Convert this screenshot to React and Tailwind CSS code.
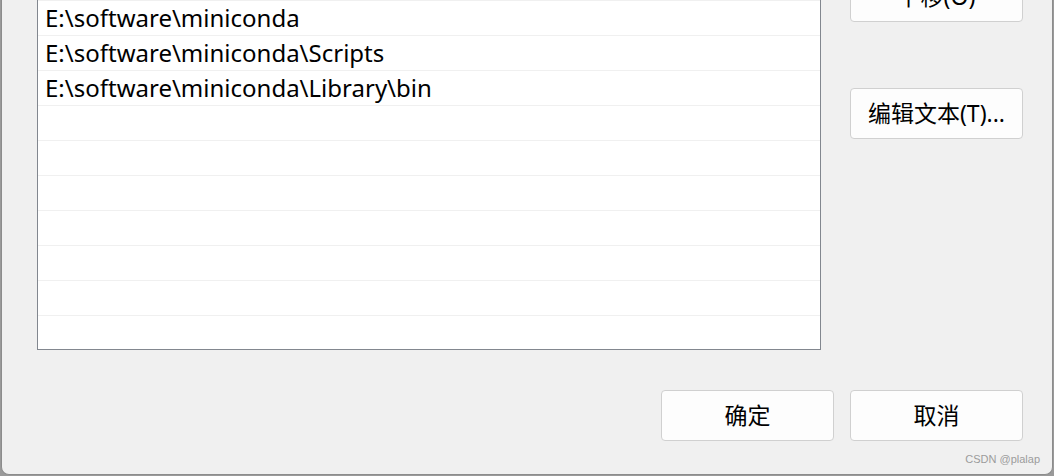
const rows = [
  'E:\\software\\miniconda',
  'E:\\software\\miniconda\\Scripts',
  'E:\\software\\miniconda\\Library\\bin',
  '', '', '', '', '', '', '',
]

function Btn({ children, className = '' }) {
  return (
    <div
      className={`flex h-[51px] w-[173px] items-center justify-center rounded-[4px] border border-[#d0d0d0] bg-[#fdfdfd] text-[23px] text-black ${className}`}
    >
      {children}
    </div>
  )
}

export default function App() {
  return (
    <div
      className="h-[476px] w-[1054px] overflow-hidden bg-[#9a9a9a]"
      style={{ fontFamily: '"Noto Sans", "Noto Sans CJK SC", sans-serif' }}
    >
      <div className="relative ml-[1px] h-[475px] w-[1052px] rounded-b-[8px] border-x border-b border-[#8c8c8c] bg-[#f0f0f0]">
        <div className="flex">
          <div className="ml-[35px] w-[784px] border-x border-b border-[#82878f] bg-white">
            {rows.map((r, i) => (
              <div
                key={i}
                className={`flex ${i === rows.length - 1 ? 'h-[34px]' : 'h-[35px]'} items-center border-t border-[#f0f0f0] pl-[7px] text-[24px] leading-none text-black`}
              >
                {r}
              </div>
            ))}
          </div>
          <div className="ml-[29px] flex flex-col">
            <Btn className="-mt-[29px]">下移(O)</Btn>
            <Btn className="mt-[66px]">编辑文本(T)...</Btn>
          </div>
        </div>
        <div className="mt-[40px] flex justify-end gap-[16px] pr-[29px]">
          <Btn>确定</Btn>
          <Btn>取消</Btn>
        </div>
        <div className="absolute bottom-[7px] right-[12px] text-[11px] text-[#9c9c9c]" style={{ fontFamily: '"Liberation Sans", sans-serif' }}>
          CSDN @plalap
        </div>
      </div>
    </div>
  )
}
